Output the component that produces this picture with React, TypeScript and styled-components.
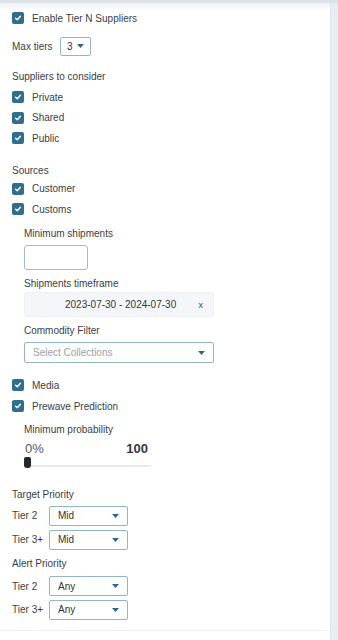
import React from "react";
import styled, { createGlobalStyle } from "styled-components";

const GlobalStyle = createGlobalStyle`
  html, body {
    margin: 0;
    padding: 0;
    background: #ffffff;
  }
  body {
    font-family: "Liberation Sans", Arial, sans-serif;
    color: #3a3e44;
  }
`;

const Frame = styled.div`
  display: flex;
  width: 338px;
  height: 640px;
  box-sizing: border-box;
  border-top: 3px solid #dde2e9;
  overflow: hidden;
`;

const Panel = styled.div`
  flex: 1;
  display: flex;
  flex-direction: column;
  background: linear-gradient(#f1f3f6 0, #ffffff 9px);
`;

const Content = styled.div`
  flex: 1;
  padding: 5px 0 0 12px;
  display: flex;
  flex-direction: column;
`;

const Footer = styled.div`
  height: 9px;
  border-top: 1px solid #eef0f3;
`;

const Strip = styled.div`
  width: 7px;
  background: #e8edf5;
  border-left: 1px solid #dfe4eb;
`;

const Label = styled.div<{ mt?: number }>`
  margin-top: ${({ mt }) => mt ?? 0}px;
  height: 14px;
  line-height: 14px;
  font-size: 10px;
  white-space: nowrap;
`;

const CheckRow = styled.label<{ mt?: number }>`
  margin-top: ${({ mt }) => mt ?? 0}px;
  height: 20.6px;
  display: flex;
  align-items: center;
  gap: 8px;
  font-size: 10px;
  white-space: nowrap;
`;

const Box = styled.span`
  width: 12px;
  height: 12px;
  border-radius: 2px;
  background: #2f6e8e;
  display: flex;
  align-items: center;
  justify-content: center;
`;

const Check = ({ label, mt }: { label: string; mt?: number }) => (
  <CheckRow mt={mt}>
    <Box>
      <svg width="8" height="8" viewBox="0 0 8 8">
        <path d="M1.6 4.2 L3.3 5.8 L6.4 2.3" fill="none" stroke="#fff" strokeWidth="1.4" strokeLinecap="round" strokeLinejoin="round" />
      </svg>
    </Box>
    {label}
  </CheckRow>
);

const Caret = () => (
  <svg width="7" height="4" viewBox="0 0 7 4">
    <path d="M0 0 H7 L3.5 4 Z" fill="#2d6a8a" />
  </svg>
);

const InlineRow = styled.div<{ mt?: number; h: number }>`
  margin-top: ${({ mt }) => mt ?? 0}px;
  height: ${({ h }) => h}px;
  display: flex;
  align-items: center;
  font-size: 10px;
`;

const RowLabel = styled.span<{ w: number }>`
  width: ${({ w }) => w}px;
  white-space: nowrap;
`;

const Select = styled.div<{ w: number; h: number; pad?: number }>`
  box-sizing: border-box;
  width: ${({ w }) => w}px;
  height: ${({ h }) => h}px;
  border: 1px solid #93b5cb;
  border-radius: 2px;
  background: #fff;
  display: flex;
  align-items: center;
  justify-content: space-between;
  padding: 0 ${({ pad }) => pad ?? 8}px 0 ${({ pad }) => pad ?? 8}px;
  font-size: 10px;
  color: #2f3337;
`;

const Indent = styled.div`
  padding-left: 12px;
  display: flex;
  flex-direction: column;
`;

const TextInput = styled.div<{ mt?: number }>`
  margin-top: ${({ mt }) => mt ?? 0}px;
  box-sizing: border-box;
  width: 64px;
  height: 25px;
  border: 1px solid #9dbcd0;
  border-radius: 3px;
`;

const DateBox = styled.div<{ mt?: number }>`
  margin-top: ${({ mt }) => mt ?? 0}px;
  box-sizing: border-box;
  width: 190px;
  height: 25px;
  background: #f4f6f9;
  border: 1px solid #edf0f4;
  border-radius: 3px;
  display: flex;
  align-items: center;
  padding: 0 10px 0 40px;
  font-size: 10px;
  color: #33373c;
`;

const DateText = styled.span`
  flex: 1;
`;

const Clear = styled.span`
  font-size: 9px;
  color: #4a4e54;
`;

const Placeholder = styled.span`
  color: #9ba1a8;
`;

const Values = styled.div<{ mt?: number }>`
  margin-top: ${({ mt }) => mt ?? 0}px;
  width: 124px;
  height: 16px;
  line-height: 16px;
  display: flex;
  justify-content: space-between;
  font-size: 13px;
`;

const Min = styled.span`
  color: #55595f;
  padding-left: 1px;
`;

const Max = styled.span`
  font-weight: bold;
  color: #35393e;
`;

const Slider = styled.div`
  position: relative;
  width: 127px;
  height: 12px;
`;

const Track = styled.div`
  position: absolute;
  left: 0;
  right: 0;
  top: 8px;
  height: 2px;
  background: #e7e9ec;
`;

const Handle = styled.div`
  position: absolute;
  left: 0;
  top: 0;
  width: 7px;
  height: 11px;
  border-radius: 2px 2px 3px 3px;
  background: #26282b;
`;

const tiers = (value: string) => [
  { label: "Tier 2", value },
  { label: "Tier 3+", value },
];

export default function App() {
  return (
    <>
      <GlobalStyle />
      <Frame>
        <Panel>
          <Content>
            <Check label="Enable Tier N Suppliers" />
            <InlineRow mt={8} h={19}>
              <RowLabel w={48}>Max tiers</RowLabel>
              <Select w={31} h={19} pad={6}>
                3 <Caret />
              </Select>
            </InlineRow>

            <Label mt={14}>Suppliers to consider</Label>
            <Check label="Private" mt={3.3} />
            <Check label="Shared" />
            <Check label="Public" />

            <Label mt={15.6}>Sources</Label>
            <Check label="Customer" />
            <Check label="Customs" />

            <Indent>
              <Label mt={8}>Minimum shipments</Label>
              <TextInput mt={3.3} />
              <Label mt={7.7}>Shipments timeframe</Label>
              <DateBox mt={0.7}>
                <DateText>2023-07-30 - 2024-07-30</DateText>
                <Clear>x</Clear>
              </DateBox>
              <Label mt={7.3}>Commodity Filter</Label>
              <Select w={190} h={21} style={{ marginTop: 3.7 }}>
                <Placeholder>Select Collections</Placeholder>
                <Caret />
              </Select>
            </Indent>

            <Check label="Media" mt={12} />
            <Check label="Prewave Prediction" />

            <Indent>
              <Label mt={7.1}>Minimum probability</Label>
              <Values mt={3.3}>
                <Min>0%</Min>
                <Max>100</Max>
              </Values>
              <Slider>
                <Track />
                <Handle />
              </Slider>
            </Indent>

            <Label mt={19}>Target Priority</Label>
            {tiers("Mid").map((t, i) => (
              <InlineRow key={"t" + t.label} mt={i === 0 ? 4 : 4} h={20}>
                <RowLabel w={37}>{t.label}</RowLabel>
                <Select w={79} h={20}>
                  {t.value}
                  <Caret />
                </Select>
              </InlineRow>
            ))}

            <Label mt={7.3}>Alert Priority</Label>
            {tiers("Any").map((t, i) => (
              <InlineRow key={"a" + t.label} mt={i === 0 ? 5.3 : 3.5} h={20}>
                <RowLabel w={37}>{t.label}</RowLabel>
                <Select w={79} h={20}>
                  {t.value}
                  <Caret />
                </Select>
              </InlineRow>
            ))}
          </Content>
          <Footer />
        </Panel>
        <Strip />
      </Frame>
    </>
  );
}
